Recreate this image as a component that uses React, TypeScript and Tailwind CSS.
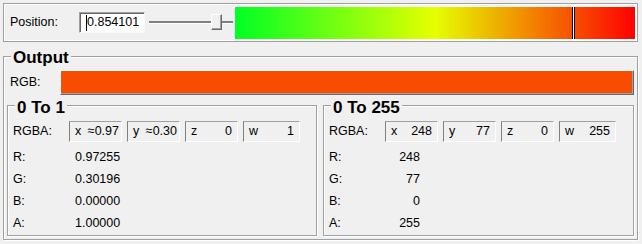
import React from 'react';

const FONT = { fontFamily: '"Liberation Sans", Arial, sans-serif' };

type Cell = { axis: string; value: string; width: string; pr: string };

const unitCells: Cell[] = [
  { axis: 'x', value: '≈0.97', width: 'w-[53px]', pr: 'pr-[2px]' },
  { axis: 'y', value: '≈0.30', width: 'w-[53px]', pr: 'pr-[2px]' },
  { axis: 'z', value: '0', width: 'w-[53px]', pr: 'pr-[5px]' },
  { axis: 'w', value: '1', width: 'w-[57px]', pr: 'pr-[5px]' },
];

const byteCells: Cell[] = [
  { axis: 'x', value: '248', width: 'w-[53px]', pr: 'pr-[5px]' },
  { axis: 'y', value: '77', width: 'w-[53px]', pr: 'pr-[5px]' },
  { axis: 'z', value: '0', width: 'w-[53px]', pr: 'pr-[5px]' },
  { axis: 'w', value: '255', width: 'w-[57px]', pr: 'pr-[5px]' },
];

function GroupBox({
  title,
  className,
  labelClass,
  children,
}: {
  title: string;
  className: string;
  labelClass: string;
  children: React.ReactNode;
}) {
  return (
    <div
      className={`relative border border-[#a0a0a0] shadow-[1px_1px_0_#fff,inset_1px_1px_0_#fff] ${className}`}
    >
      <span
        className={`absolute px-[2px] bg-[#f0f0f0] text-[17px] leading-[17px] font-bold text-black ${labelClass}`}
      >
        {title}
      </span>
      {children}
    </div>
  );
}

function ChannelGroup({
  title,
  cells,
  rows,
  rightAlign,
  className,
}: {
  title: string;
  cells: Cell[];
  rows: [string, string][];
  rightAlign: boolean;
  className: string;
}) {
  return (
    <GroupBox title={title} className={className} labelClass="left-[7px] top-[-7px]">
      <div className="flex flex-col pt-[15px] pl-[5px]">
        {/* RGBA fields */}
        <div className="flex items-center h-[21px]">
          <span className="w-[56px]">RGBA:</span>
          <div className="flex gap-[5px]">
            {cells.map((c) => (
              <div
                key={c.axis}
                className={`flex items-center justify-between h-[21px] pl-[5px] ${c.pr} ${c.width} border border-t-[#a0a0a0] border-l-[#808080] border-r-white border-b-white`}
              >
                <span>{c.axis}</span>
                <span>{c.value}</span>
              </div>
            ))}
          </div>
        </div>

        {/* channel rows */}
        <div className="flex flex-col mt-[4px]">
          {rows.map(([k, v]) => (
            <div key={k} className="flex items-center h-[22px]">
              {rightAlign ? (
                <>
                  <span className="w-[57px]">{k}</span>
                  <span className="w-[34px] text-right">{v}</span>
                </>
              ) : (
                <>
                  <span className="w-[62px]">{k}</span>
                  <span>{v}</span>
                </>
              )}
            </div>
          ))}
        </div>
      </div>
    </GroupBox>
  );
}

export default function App() {
  return (
    <div
      className="w-[642px] h-[244px] bg-[#f0f0f0] p-[3px] flex flex-col text-[12.5px] text-black overflow-hidden"
      style={FONT}
    >
      {/* Position bar */}
      <div className="h-[39px] w-[635px] flex items-center pl-[6px] border border-[#a0a0a0] shadow-[inset_0_0_0_1px_#fff]">
        <span className="w-[69px]">Position:</span>
        <div className="w-[66px] h-[21px] flex items-center bg-white border border-t-[#a0a0a0] border-l-[#a0a0a0] border-r-[#f8f8f8] border-b-[#f8f8f8] shadow-[inset_1px_1px_0_#696969]">
          <span className="ml-[6px] w-px h-[16px] bg-black" />
          <span>0.854101</span>
        </div>
        <div className="relative ml-[4px] w-[84px] h-[21px] flex items-center">
          <div className="w-full h-[2px] bg-[#808080] border-b border-white box-content" />
          <div className="absolute left-[62px] top-[2px] w-[11px] h-[16px] bg-[#f0f0f0] border border-t-white border-l-white border-r-[#696969] border-b-[#696969] shadow-[inset_-1px_-1px_0_#a0a0a0]" />
        </div>
        <div className="relative ml-[1px] mt-[1px] w-[402px] h-[34px] border border-white bg-[linear-gradient(to_right,#00ff24_0%,#e6ff00_50%,#ff0000_100%)]">
          <div className="absolute left-[337px] top-0 h-full w-[3px] bg-white border-x border-black" />
        </div>
      </div>

      {/* Output group */}
      <GroupBox
        title="Output"
        className="mt-[14px] w-[635px] h-[184px] flex flex-col pl-[3px] pr-[3px]"
        labelClass="left-[7px] top-[-8px]"
      >
        <div className="flex items-center h-[25px] mt-[13px] pl-[3px]">
          <span className="w-[50px]">RGB:</span>
          <div className="w-[575px] h-[25px] bg-[#f84d00] border border-t-white border-l-white border-r-[#696969] border-b-[#696969] shadow-[inset_-1px_-1px_0_#a0a0a0]" />
        </div>
        <div className="flex gap-[6px] mt-[10px]">
          <ChannelGroup
            title="0 To 1"
            className="w-[310px] h-[131px]"
            cells={unitCells}
            rightAlign={false}
            rows={[
              ['R:', '0.97255'],
              ['G:', '0.30196'],
              ['B:', '0.00000'],
              ['A:', '1.00000'],
            ]}
          />
          <ChannelGroup
            title="0 To 255"
            className="w-[311px] h-[131px]"
            cells={byteCells}
            rightAlign={true}
            rows={[
              ['R:', '248'],
              ['G:', '77'],
              ['B:', '0'],
              ['A:', '255'],
            ]}
          />
        </div>
      </GroupBox>
    </div>
  );
}
